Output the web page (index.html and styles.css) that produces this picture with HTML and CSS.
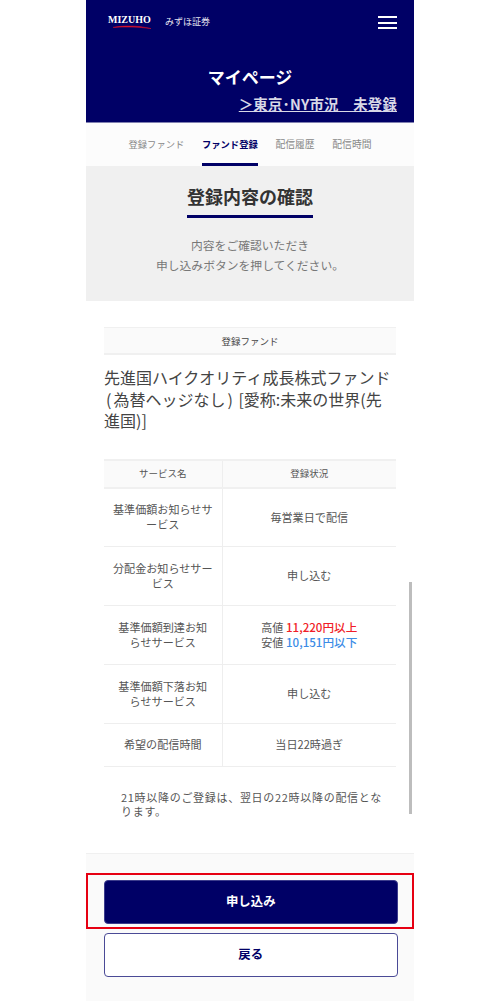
FILE: index.html
```html
<!DOCTYPE html>
<html lang="ja">
<head>
    <meta charset="UTF-8">
    <meta name="viewport" content="width=device-width, initial-scale=1.0">
    <title>マイページ</title>
    <link rel="stylesheet" href="styles.css">
</head>
<body>
    <div class="phone">
        <header class="header">
            <div class="header-top">
                <div class="logo">
                    <div class="logo-mark">
                        <span class="logo-word">MIZUHO</span>
                        <svg class="logo-swoosh" width="38" height="4" viewBox="0 0 38 4">
                            <path d="M0 2.4 C10 0.6 24 0.2 38 3.6 C26 1.8 12 1.8 0 2.4 Z" fill="#d9102a" stroke="#d9102a" stroke-width="0.5"/>
                        </svg>
                    </div>
                    <span class="logo-sub">みずほ証券</span>
                </div>
                <div class="burger"><span></span><span></span><span></span></div>
            </div>
            <h1 class="page-title">マイページ</h1>
            <a class="market-link" href="#">＞東京･NY市況　未登録</a>
        </header>

        <nav class="tabs">
            <a href="#" class="kana">登録ファンド</a>
            <a href="#" class="kana active">ファンド登録</a>
            <a href="#">配信履歴</a>
            <a href="#">配信時間</a>
        </nav>

        <section class="intro">
            <h2 class="intro-title">登録内容の確認</h2>
            <p class="intro-text">内容をご確認いただき<br>申し込みボタンを押してください。</p>
        </section>

        <main class="content">
            <div class="fund-label">登録ファンド</div>
            <p class="fund-name">先進国ハイクオリティ成長株式ファンド<br><span class="paren">(</span>為替ヘッジなし<span class="paren">)</span> [愛称:未来の世界(先<br>進国)]</p>

            <table class="service-table">
                <thead>
                    <tr>
                        <th>サービス名</th>
                        <th>登録状況</th>
                    </tr>
                </thead>
                <tbody>
                    <tr>
                        <td>基準価額お知らせサ<br>ービス</td>
                        <td>毎営業日で配信</td>
                    </tr>
                    <tr>
                        <td>分配金お知らせサー<br>ビス</td>
                        <td>申し込む</td>
                    </tr>
                    <tr>
                        <td>基準価額到達お知<br>らせサービス</td>
                        <td>高値 <span class="high">11,220円以上</span><br>安値 <span class="low">10,151円以下</span></td>
                    </tr>
                    <tr>
                        <td>基準価額下落お知<br>らせサービス</td>
                        <td>申し込む</td>
                    </tr>
                    <tr class="short">
                        <td>希望の配信時間</td>
                        <td>当日22時過ぎ</td>
                    </tr>
                </tbody>
            </table>

            <p class="note">21時以降のご登録は、翌日の22時以降の配信となります。</p>
        </main>

        <footer class="actions">
            <button class="btn btn-primary">申し込み</button>
            <button class="btn btn-back">戻る</button>
        </footer>

        <div class="scrollbar"></div>
        <div class="highlight"></div>
    </div>
</body>
</html>
```
FILE: styles.css
```css
* {
    box-sizing: border-box;
}

body {
    margin: 0;
    background-color: #fff;
    font-family: "Noto Sans CJK JP", "Noto Sans", sans-serif;
    color: #444;
}

.phone {
    position: relative;
    width: 328px;
    height: 1002px;
    margin-left: 86px;
    overflow: hidden;
}

.header {
    height: 123px;
    background-color: #000066;
    color: #fff;
    border-bottom: 1px solid #8080b0;
}

.header-top {
    display: flex;
    justify-content: space-between;
    align-items: flex-start;
    height: 67px;
    padding: 15px 17px 0 22px;
}

.logo {
    display: flex;
    gap: 15px;
}

.logo-mark {
    display: flex;
    flex-direction: column;
    width: 42px;
}

.logo-word {
    font-family: "Liberation Serif", serif;
    font-size: 10px;
    font-weight: bold;
    line-height: 10px;
    white-space: nowrap;
}

.logo-swoosh {
    display: block;
    margin-left: 5px;
}

.logo-sub {
    font-size: 9px;
    line-height: 12px;
    margin-top: 1px;
    color: #e6e6f0;
}

.burger {
    display: flex;
    flex-direction: column;
    gap: 3.6px;
    width: 19px;
    margin-top: 1px;
}

.burger span {
    display: block;
    height: 2px;
    background-color: #fff;
}

.page-title {
    margin: 0;
    text-align: center;
    font-size: 17px;
    line-height: 20px;
    font-weight: bold;
}

.market-link {
    display: block;
    width: max-content;
    margin: 7px 17px 0 auto;
    font-size: 14.4px;
    letter-spacing: 0.2px;
    line-height: 19px;
    font-weight: bold;
    color: #d8d8e6;
    text-decoration: underline;
    white-space: nowrap;
}

.tabs {
    display: flex;
    justify-content: center;
    gap: 17.7px;
    height: 43px;
    background-color: #fcfcfc;
}

.tabs a {
    padding-top: 13px;
    font-size: 9.8px;
    line-height: 16px;
    color: #888;
    text-decoration: none;
}

.tabs a.kana {
    font-size: 9.3px;
}

.tabs a.active {
    color: #000066;
    font-weight: bold;
    border-bottom: 3px solid #000066;
}

.intro {
    height: 135px;
    padding-top: 17px;
    background-color: #f0f0f0;
    text-align: center;
}

.intro-title {
    width: 126px;
    margin: 0 auto;
    padding-bottom: 6px;
    font-size: 18px;
    line-height: 26px;
    font-weight: bold;
    color: #333;
    border-bottom: 3px solid #000066;
}

.intro-text {
    margin: 17px 0 0;
    font-size: 11.8px;
    line-height: 20px;
    color: #777;
}

.content {
    height: 552px;
    padding: 26px 18px 0;
}

.fund-label {
    height: 28px;
    font-size: 9.5px;
    line-height: 26px;
    text-align: center;
    background-color: #fafafa;
    border-top: 1px solid #f0f0f0;
    border-bottom: 2px solid #f0f0f0;
}

.fund-name {
    margin: 12px 0 0;
    font-size: 16px;
    line-height: 21.5px;
    color: #444;
}

.paren {
    padding: 0 2px;
}

.service-table {
    width: 100%;
    margin-top: 27px;
    border-collapse: collapse;
    table-layout: fixed;
    font-size: 11.1px;
    line-height: 15.5px;
    text-align: center;
    color: #555;
}

.service-table th {
    height: 28px;
    font-size: 9.5px;
    font-weight: normal;
    background-color: #fafafa;
    border-top: 2px solid #f0f0f0;
    border-bottom: 2px solid #f0f0f0;
}

.service-table th:first-child,
.service-table td:first-child {
    width: 118px;
    border-right: 1px solid #eee;
}

.service-table td {
    height: 59px;
    padding: 0 4px;
    border-bottom: 1px solid #eee;
    white-space: nowrap;
}

.service-table tr.short td {
    height: 43px;
}

.high {
    color: #f01e28;
    font-size: 11.6px;
    font-weight: 500;
}

.low {
    color: #3c8ce6;
    font-size: 11.6px;
    font-weight: 500;
}

.note {
    margin: 23px 0 0;
    padding: 0 12px 0 17px;
    font-size: 11px;
    letter-spacing: 0.7px;
    line-height: 14px;
    color: #555;
}

.actions {
    display: flex;
    flex-direction: column;
    gap: 9px;
    height: 148px;
    padding: 26px 16px 0 17.5px;
    background-color: #fafafa;
    border-top: 1px solid #f0f0f0;
}

.btn {
    display: block;
    width: 100%;
    height: 44px;
    flex-shrink: 0;
    padding-bottom: 3px;
    font-family: inherit;
    font-size: 12.4px;
    font-weight: bold;
    border-radius: 4px;
}

.btn-primary {
    background-color: #000066;
    border: 1px solid #3c3c8c;
    color: #fff;
}

.btn-back {
    background-color: #fff;
    border: 1px solid #4a4a96;
    color: #000066;
}

.scrollbar {
    position: absolute;
    top: 582px;
    left: 323px;
    width: 3px;
    height: 232px;
    background-color: #bdbdbd;
}

.highlight {
    position: absolute;
    top: 873px;
    left: 0;
    width: 328px;
    height: 56px;
    border: 2px solid #e60012;
}
```
